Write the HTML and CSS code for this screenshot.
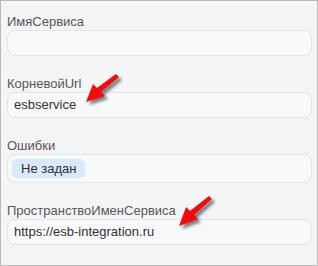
FILE: index.html
```html
<!DOCTYPE html>
<html lang="ru">
<head>
<meta charset="utf-8">
<link rel="stylesheet" href="styles.css">
</head>
<body>
<div class="panel">
  <div class="field">
    <div class="label">ИмяСервиса</div>
    <div class="input"></div>
  </div>
  <div class="field">
    <div class="label">КорневойUrl</div>
    <div class="input">esbservice</div>
  </div>
  <div class="field">
    <div class="label">Ошибки</div>
    <div class="input input-tags"><span class="tag">Не задан</span></div>
  </div>
  <div class="field">
    <div class="label">ПространствоИменСервиса</div>
    <div class="input">https://esb-integration.ru</div>
  </div>

  <svg class="arrow arrow-1" width="44" height="40" viewBox="0 0 44 40">
    <defs>
      <filter id="sh1" x="-30%" y="-30%" width="160%" height="160%">
        <feGaussianBlur stdDeviation="1.6"/>
      </filter>
    </defs>
    <g transform="translate(3,3)" fill="#555" opacity="0.75" filter="url(#sh1)">
      <path d="M32 2 L35 5 L17 20 L21 24 L2 30 L9 12 L13 16 Z"/>
    </g>
    <path fill="#f50a0a" d="M32 2 L35 5 L17 20 L21 24 L2 30 L9 12 L13 16 Z"/>
  </svg>

  <svg class="arrow arrow-2" width="44" height="40" viewBox="0 0 44 40">
    <defs>
      <filter id="sh2" x="-30%" y="-30%" width="160%" height="160%">
        <feGaussianBlur stdDeviation="1.6"/>
      </filter>
    </defs>
    <g transform="translate(3,3)" fill="#555" opacity="0.75" filter="url(#sh2)">
      <path d="M32 2 L35 5 L17 21 L21 25 L2 32 L9 13 L13 17 Z"/>
    </g>
    <path fill="#f50a0a" d="M32 2 L35 5 L17 21 L21 25 L2 32 L9 13 L13 17 Z"/>
  </svg>
</div>
</body>
</html>
```
FILE: styles.css
```css
html, body {
  margin: 0;
  padding: 0;
  background: #f4f5f7;
}

.panel {
  position: relative;
  box-sizing: border-box;
  width: 318px;
  height: 266px;
  border: 1px solid #b9b9b9;
  background: #f4f5f7;
  padding: 13px 5px 0 6px;
  display: flex;
  flex-direction: column;
  gap: 20px;
  font-family: "Liberation Sans", Arial, sans-serif;
  font-size: 13px;
}

.field {
  display: flex;
  flex-direction: column;
  gap: 1px;
}

.label {
  color: #585656;
  line-height: 15px;
  height: 15px;
}

.input {
  box-sizing: border-box;
  height: 26px;
  border: 1px solid #e3e5e9;
  border-radius: 8px;
  background: #f8f9fb;
  color: #333;
  padding: 0 6px;
  line-height: 24px;
  display: flex;
  align-items: center;
}

.input-tags {
  height: 29px;
  padding: 0 4px;
}

.tag {
  background: #d7e9fa;
  border-radius: 5px;
  padding: 0 9px;
  height: 19px;
  line-height: 19px;
  color: #3a3030;
}

.arrow {
  position: absolute;
  pointer-events: none;
}

.arrow-1 {
  left: 83px;
  top: 71px;
}

.arrow-2 {
  left: 176px;
  top: 193px;
}
```
